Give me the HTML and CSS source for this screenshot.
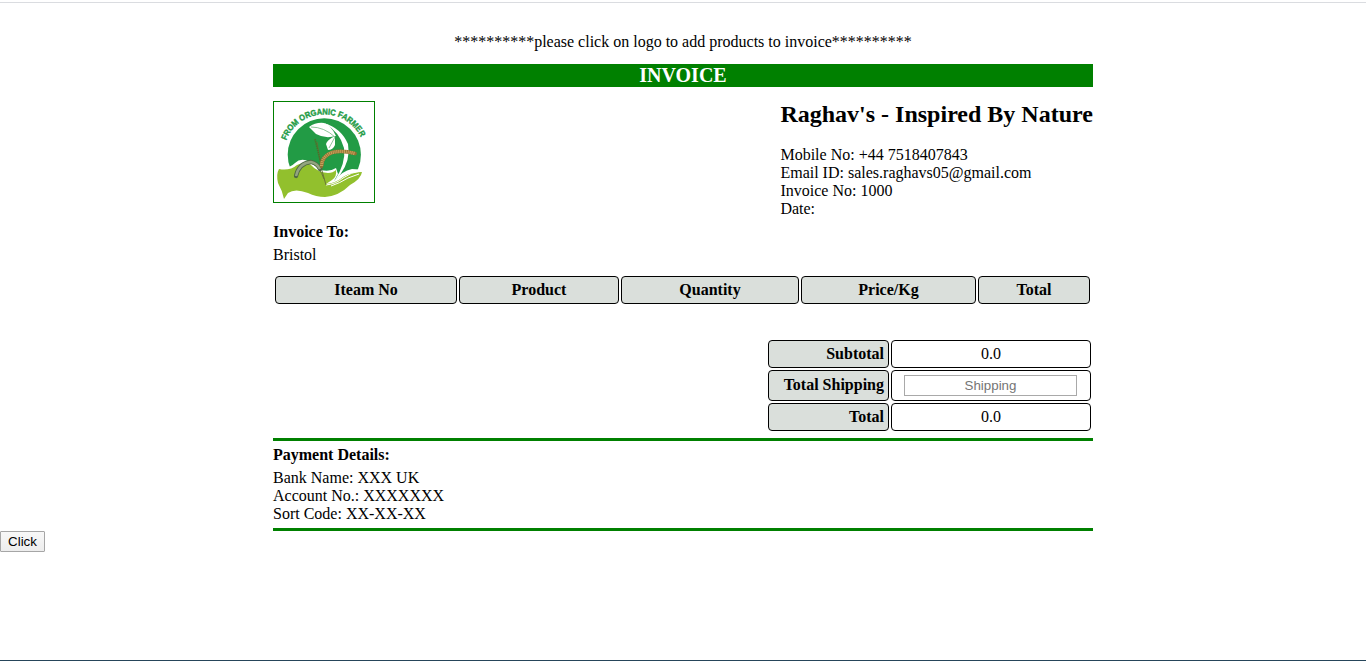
FILE: index.html
```html
<!DOCTYPE html>
<html lang="en">
<head>
<meta charset="utf-8">
<title>Invoice</title>
<link rel="stylesheet" href="styles.css">
</head>
<body>
<main class="invoice">
  <p class="hint">**********please click on logo to add products to invoice**********</p>
  <h1 class="banner">INVOICE</h1>
  <header class="company">
    <svg class="logo" viewBox="0 0 100 100" role="img" aria-label="From Organic Farmer">
      <defs><path id="arc" d="M12.3 38.5 A 40 38.5 0 0 1 88 38.5"/></defs>
      <circle cx="50.3" cy="52.8" r="36.6" fill="#229b45"/>
      <path d="M3 66 Q14 68 21 61 Q27 55 36 60 L47 68 Q56 70 62 66 L64 72 L60 79 Q68 69 78 67 L92 68 L90 86 L50 99 L4 86 Z" fill="#fff"/>
      <path d="M35 25 Q42 20 50 21 Q57 23 62 34 Q51 37 42 32 Q39 29 35 25 Z" fill="#fff"/>
      <path d="M50 21 Q67 26 74 42 Q77 58 66 73 L61 78 Q72 61 70 46 Q66 30 50 21 Z" fill="#fff"/>
      <path d="M61 34 Q53 38 52 42 L54 48 Q59 48 61 43 Q61 39 61 34 Z" fill="#fff"/>
      <path d="M37 25 Q50 25 61 35 L55 46" fill="none" stroke="#5cab6d" stroke-width=".7"/>
      <path d="M5 67 Q16 69 23 63 Q31 59 37 63 Q43 70 54 71 Q59 71 62 68 Q63 75 58 78 Q55 80 52 82 Q62 81 69 75 Q77 70 88 70 Q87 77 76 83 Q65 94 51 95 Q42 95 34 91 Q21 86 14 91 L10 97 Q8 88 4 81 Q2 72 5 67 Z" fill="#92c02d"/>
      <path d="M52 83 Q62 82 69 76 Q77 70 87 69 M57 84 Q66 81 74 76 L85 72" fill="none" stroke="#fff" stroke-width="1"/>
      <path d="M43 40 L47 65 L52 83 M37 61 Q46 65 50 77 M48 67 Q48 59 52 55" fill="none" stroke="#657034" stroke-width=".9"/>
      <path d="M41 37 L47 62" fill="none" stroke="#4c702c" stroke-width="1.6" stroke-dasharray="1.5 .7"/>
      <path d="M22 74 Q25 61 37 60 Q43 61 46 67" fill="none" stroke="#4f6943" stroke-width="4.3" stroke-linecap="round"/>
      <path d="M22 74 Q25 61 37 60 Q43 61 46 67" fill="none" stroke="#93a580" stroke-width="2.5"/>
      <path d="M47.5 64 Q48 54 58 50.5 Q68 48 81 51.5" fill="none" stroke="#927033" stroke-width="3.8" stroke-linecap="round"/>
      <path d="M47.5 64 Q48 54 58 50.5 Q68 48 81 51.5" fill="none" stroke="#c7a35c" stroke-width="3.2" stroke-dasharray="1.1 .8"/>
      <text class="logo-text"><textPath href="#arc" textLength="94" lengthAdjust="spacingAndGlyphs">FROM ORGANIC FARMER</textPath></text>
    </svg>
    <div class="contact">
      <h2 class="company-name">Raghav's - Inspired By Nature</h2>
      <div>Mobile No: +44 7518407843</div>
      <div>Email ID: sales.raghavs05@gmail.com</div>
      <div>Invoice No: 1000</div>
      <div>Date:</div>
    </div>
  </header>
  <section class="recipient">
    <h3 class="label">Invoice To:</h3>
    <div>Bristol</div>
  </section>
  <div class="items">
    <div class="cell head">Iteam No</div>
    <div class="cell head">Product</div>
    <div class="cell head">Quantity</div>
    <div class="cell head">Price/Kg</div>
    <div class="cell head">Total</div>
  </div>
  <div class="totals">
    <div class="cell head right">Subtotal</div><div class="cell">0.0</div>
    <div class="cell head right raised">Total Shipping</div><div class="cell entry"><input class="shipping" placeholder="Shipping"></div>
    <div class="cell head right">Total</div><div class="cell">0.0</div>
  </div>
  <section class="payment">
    <h3 class="label">Payment Details:</h3>
    <div>Bank Name: XXX UK</div>
    <div>Account No.: XXXXXXX</div>
    <div>Sort Code: XX-XX-XX</div>
  </section>
</main>
<button class="click">Click</button>
</body>
</html>
```

FILE: styles.css
```css
* { box-sizing: border-box; }
body {
  margin: 0;
  height: 661px;
  padding-top: 2px;
  display: flex;
  flex-direction: column;
  align-items: flex-start;
  overflow: hidden;
  background: #fff;
  border-bottom: 1px solid #26455a;
  color: #000;
  font: 16px/18px "Liberation Serif", "Times New Roman", serif;
}
body::before { content: ""; width: 100%; height: 1px; background: #dadce0; }
h1, h2, h3, p { margin: 0; }
.invoice { width: 820px; margin: 0 auto; padding-top: 30px; }
.hint { text-align: center; }
.banner {
  margin-top: 13px;
  background: #008000;
  color: #fff;
  font-size: 20px;
  line-height: 23px;
  text-align: center;
}
.company { display: flex; justify-content: space-between; align-items: flex-start; margin-top: 14px; }
.logo { width: 102px; height: 102px; border: 1px solid #008000; }
.logo-text { font: bold 8.4px "Liberation Sans", Arial, sans-serif; fill: #229b45; stroke: #229b45; stroke-width: .4px; }
.contact { width: 312.6px; white-space: nowrap; }
.company-name { margin-bottom: 18px; font-size: 24px; line-height: 27px; }
.recipient { margin-top: 5px; }
.label { margin-bottom: 5px; font-size: 16px; line-height: 18px; }
.items {
  display: grid;
  grid-template-columns: 182px 160px 178px 175px 112px;
  gap: 2px;
  margin: 12px 0 0 2px;
}
.totals {
  display: grid;
  grid-template-columns: 121px 200px;
  grid-template-rows: 28px 31px 28px;
  gap: 2px;
  justify-content: end;
  margin: 36px 2px 7px 0;
}
.cell {
  display: flex;
  align-items: center;
  justify-content: center;
  height: 100%;
  min-height: 28px;
  padding: 0 4px;
  border: 1px solid #000;
  border-radius: 4px;
}
.head { background: #dadfdb; font-weight: bold; }
.right { justify-content: flex-end; }
.raised { padding-bottom: 1px; }
.entry { padding-right: 5px; }
.shipping {
  width: 173px;
  height: 21px;
  padding: 1px;
  border: 1px solid #a9a9a9;
  border-radius: 0;
  font: 13.333px "Liberation Sans", Arial, sans-serif;
  text-align: center;
}
.shipping::placeholder { color: #757575; }
.payment { padding: 5px 0; border: solid #008000; border-width: 3px 0; }
.click {
  width: 45px;
  height: 21px;
  padding: 0;
  border: 1px solid #a6a6a6;
  border-radius: 1px;
  background: linear-gradient(#f8f8f8, #ededed);
  color: #000;
  font: 13.333px "Liberation Sans", Arial, sans-serif;
}
```
